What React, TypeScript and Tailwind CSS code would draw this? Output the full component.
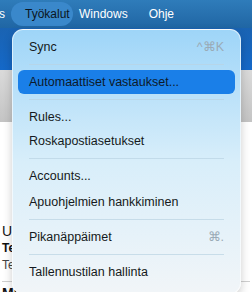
import React from "react";

const font = { fontFamily: '"Liberation Sans", Arial, sans-serif' };

const Separator = () => <div className="mx-4 h-px bg-[#b9d3e3]/70" />;

const Item = ({
  label,
  shortcut,
  active,
}: {
  label: string;
  shortcut?: string;
  active?: boolean;
}) => (
  <div
    className={`mx-[5px] flex h-[24px] items-center justify-between rounded-[6px] px-[11px] text-[12.5px] ${
      active ? "bg-[#1a7fe8] text-[#0d1a2a]" : "text-[#151a20]"
    }`}
  >
    <span>{label}</span>
    {shortcut && <span className="text-[#9aaab6]">{shortcut}</span>}
  </div>
);

export default function App() {
  return (
    <div className="relative h-[292px] w-[252px] overflow-hidden bg-white" style={font}>
      {/* Menu bar */}
      <div className="flex h-[28px] items-center bg-gradient-to-b from-[#2f7cba] to-[#2066a4] text-[12px] text-white">
        <span className="-ml-[1px] w-[12px]">s</span>
        <span className="w-[62px] rounded-full bg-[#3a88cb] py-[3px] pl-[14px] text-[#0b1622]">Työkalut</span>
        <span className="ml-[6px]">Windows</span>
        <span className="ml-[21px]">Ohje</span>
      </div>
      {/* Window content behind the menu */}
      <div className="h-[42px] bg-gradient-to-b from-[#1a63b2] to-[#1468c8]" />
      <div className="h-[52px] bg-gradient-to-b from-[#dadada] to-[#c4c4c4]" />
      <div className="px-[2px] pt-[100px] text-[#111]">
        <div className="text-[14px] leading-[18px]">U</div>
        <div className="text-[12px] font-bold leading-[17px]">Te</div>
        <div className="text-[12px] leading-[17px] text-[#444]">Te</div>
        <div className="mt-[7px] border-t border-[#d0d0d0] pt-[1px] text-[14px] font-bold">Microsoft Outlook</div>
      </div>

      {/* Dropdown menu */}
      <div className="absolute left-[12px] top-[29px] w-[229px] rounded-[11px] border border-white/60 bg-gradient-to-b from-[#9ed5f8] via-[#d8eefa] to-[#f1f5f8] pb-[9px] pt-[5px] shadow-[0_4px_10px_rgba(0,0,0,0.2)]">
        <Item label="Sync" shortcut="^⌘K" />
        <div className="py-[5px]">
          <Separator />
        </div>
        <Item label="Automaattiset vastaukset..." active />
        <div className="py-[5px]">
          <Separator />
        </div>
        <Item label="Rules..." />
        <Item label="Roskapostiasetukset" />
        <div className="py-[5px]">
          <Separator />
        </div>
        <Item label="Accounts..." />
        <div className="h-[2px]" />
        <Item label="Apuohjelmien hankkiminen" />
        <div className="py-[5px]">
          <Separator />
        </div>
        <Item label="Pikanäppäimet" shortcut="⌘." />
        <div className="py-[5px]">
          <Separator />
        </div>
        <Item label="Tallennustilan hallinta" />
      </div>
    </div>
  );
}
